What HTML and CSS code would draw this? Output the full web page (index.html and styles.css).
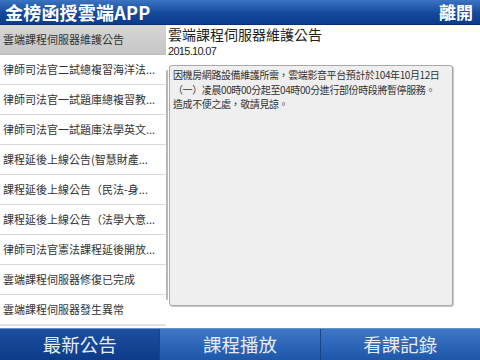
FILE: index.html
```html
<!DOCTYPE html>
<html lang="zh-Hant">
<head>
  <meta charset="UTF-8" />
  <meta name="viewport" content="width=device-width, initial-scale=1.0" />
  <title>金榜函授雲端APP</title>
  <link rel="stylesheet" href="styles.css">
</head>
<body>
  <div class="app">
    <header class="topbar">
      <h1>金榜函授雲端APP</h1>
      <span class="exit">離開</span>
    </header>

    <div class="main">
      <div class="list-wrap">
        <ul class="news-list">
          <li class="selected">雲端課程伺服器維護公告</li>
          <li>律師司法官二試總複習海洋法...</li>
          <li>律師司法官一試題庫總複習教...</li>
          <li>律師司法官一試題庫法學英文...</li>
          <li>課程延後上線公告(智慧財產...</li>
          <li>課程延後上線公告（民法-身...</li>
          <li>課程延後上線公告（法學大意...</li>
          <li>律師司法官憲法課程延後開放...</li>
          <li>雲端課程伺服器修復已完成</li>
          <li class="last">雲端課程伺服器發生異常</li>
        </ul>
        <div class="scroll-thumb"></div>
      </div>

      <section class="detail">
        <h2>雲端課程伺服器維護公告</h2>
        <div class="date">2015.10.07</div>
        <div class="content-box">
          <p>因機房網路設備維護所需，雲端影音平台預計於104年10月12日<br>（一）凌晨00時00分起至04時00分進行部份時段將暫停服務。<br>造成不便之處，敬請見諒。</p>
        </div>
      </section>
    </div>

    <nav class="tabbar">
      <div class="tab active">最新公告</div>
      <div class="tab">課程播放</div>
      <div class="tab">看課記錄</div>
    </nav>
  </div>
</body>
</html>
```

FILE: styles.css
```css
:root {
  --blue-top: #3a74c2;
  --blue-mid: #15499b;
  --blue-bot: #0b3b8c;
  --text: #333;
  --line: #d9d9d9;
}

body {
  margin: 0;
  font-family: "Noto Sans CJK TC", "Liberation Sans", sans-serif;
  background: #fff;
  color: var(--text);
}

.app {
  width: 480px;
  height: 360px;
  display: flex;
  flex-direction: column;
  overflow: hidden;
}

.topbar {
  height: 24px;
  flex: none;
  display: flex;
  align-items: center;
  justify-content: space-between;
  padding: 0 7px 0 5px;
  background: linear-gradient(var(--blue-top), var(--blue-mid) 55%, var(--blue-bot));
  border-bottom: 1px solid #0a2f6e;
  color: #fff;
}

.topbar h1 {
  margin: 0;
  font-size: 18px;
  font-weight: bold;
  line-height: 24px;
  letter-spacing: 0.2px;
}

.exit {
  font-size: 17px;
  font-weight: bold;
  line-height: 24px;
}

.main {
  flex: 1;
  display: flex;
  min-height: 0;
}

.list-wrap {
  position: relative;
  width: 166px;
  flex: none;
}

.news-list {
  list-style: none;
  margin: 0;
  padding: 0;
}

.news-list li {
  height: 29px;
  line-height: 29px;
  padding-left: 3px;
  font-size: 11px;
  white-space: nowrap;
  overflow: hidden;
  border-bottom: 1px solid var(--line);
}

.news-list li.selected {
  background: linear-gradient(#d6d6d6, #c6c6c6);
  border-bottom-color: #bdbdbd;
}

.news-list li.last {
  border-bottom: 2px solid #e2e2ee;
}

.scroll-thumb {
  position: absolute;
  left: 166px;
  top: 45px;
  width: 2px;
  height: 230px;
  background: #b8b8b8;
  border-radius: 1px;
}

.detail {
  flex: 1;
  padding-left: 2px;
}

.detail h2 {
  margin: 0;
  font-size: 14px;
  font-weight: normal;
  line-height: 19px;
  color: #222;
}

.date {
  font-family: "Liberation Sans", sans-serif;
  font-size: 11px;
  letter-spacing: -0.7px;
  line-height: 14px;
  color: #222;
  margin-bottom: 7px;
}

.content-box {
  width: 276px;
  height: 235px;
  margin-left: 1px;
  padding: 2px 3px;
  background: #efefef;
  border: 1px solid #a9a9a9;
  border-radius: 3px;
  box-shadow: 1px 1px 1px #c4c4c4;
}

.content-box p {
  margin: 0;
  font-size: 10px;
  line-height: 14.5px;
  letter-spacing: -0.4px;
  white-space: nowrap;
  color: #333;
}

.tabbar {
  height: 31px;
  flex: none;
  display: flex;
  border-top: 1px solid #6b8fc9;
}

.tab {
  flex: 1;
  text-align: center;
  font-size: 18.5px;
  line-height: 31px;
  color: #e6ecf7;
  background: linear-gradient(#3d77c6, #1f57a8);
  border-left: 1px solid #17438a;
}

.tab.active {
  background: linear-gradient(#1d4f9e, #0d3b89);
  border-left: none;
}
```
